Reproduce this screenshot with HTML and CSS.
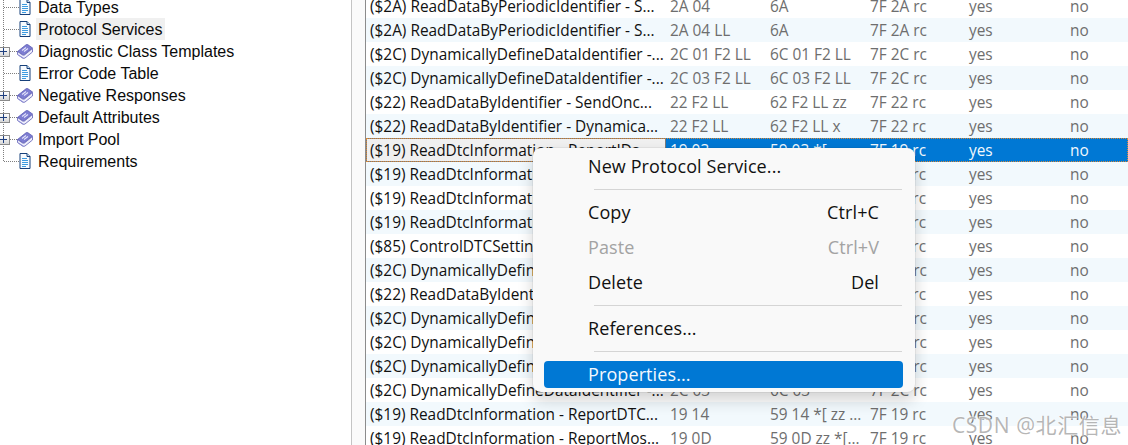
FILE: index.html
```html
<!DOCTYPE html>
<html lang="en">
<head>
<meta charset="utf-8">
<title>Protocol Services</title>
<link rel="stylesheet" href="styles.css">
</head>
<body>
<svg class="defs" width="0" height="0" aria-hidden="true">
  <symbol id="doc" viewBox="0 0 12 16">
    <path d="M1 .5h7l3 3v12h-10z" fill="#f7fbff" stroke="#17407a"/>
    <path d="M8 .5v3h3" fill="#cfe3f5" stroke="#17407a"/>
    <path d="M3 5.500h5M3 7.500h6M3 9.500h6M3 11.500h6M3 13.500h4" stroke="#3d9be0" fill="none"/>
  </symbol>
  <symbol id="book" viewBox="0 0 16 15">
    <path d="M.5 7.500 9 .8q1-.5 2 0l4.500 3.200-8 6.500q-1 .5-2 0z" fill="#7d7dd2" stroke="#5d5db4" stroke-width=".8"/>
    <path d="M.5 7.500v3l5 3.500q1.500 .7 2.500 0l7.500-6v-3.500l-8 6.500q-1 .5-2 0z" fill="#eeeefb" stroke="#6060b6" stroke-width=".8"/>
    <path d="M1.500 11l5 3.300" stroke="#8f8fd8" fill="none"/>
    <path d="M5 6.500l4-3M7 7.500l4-3" stroke="#e3e3fa" fill="none" stroke-width="1.100"/>
  </symbol>
</svg>
<main class="window">
  <nav class="tree">
    <div class="node"><span class="lead"><i class="dash"></i></span><svg class="ico-doc"><use href="#doc"/></svg><span class="label">Data Types</span></div>
    <div class="node"><span class="lead"><i class="dash"></i></span><svg class="ico-doc"><use href="#doc"/></svg><span class="label current">Protocol Services</span></div>
    <div class="node"><span class="lead"><b class="box"></b><i class="dash"></i></span><svg class="ico-book"><use href="#book"/></svg><span class="label">Diagnostic Class Templates</span></div>
    <div class="node"><span class="lead"><i class="dash"></i></span><svg class="ico-doc"><use href="#doc"/></svg><span class="label">Error Code Table</span></div>
    <div class="node"><span class="lead"><b class="box"></b><i class="dash"></i></span><svg class="ico-book"><use href="#book"/></svg><span class="label">Negative Responses</span></div>
    <div class="node"><span class="lead"><b class="box"></b><i class="dash"></i></span><svg class="ico-book"><use href="#book"/></svg><span class="label">Default Attributes</span></div>
    <div class="node"><span class="lead"><b class="box"></b><i class="dash"></i></span><svg class="ico-book"><use href="#book"/></svg><span class="label">Import Pool</span></div>
    <div class="node last"><span class="lead"><i class="dash"></i></span><svg class="ico-doc"><use href="#doc"/></svg><span class="label">Requirements</span></div>
  </nav>
  <section class="list">
    <div class="row"><span>($2A) ReadDataByPeriodicIdentifier - S...</span><span>2A 04</span><span>6A</span><span>7F 2A rc</span><span>yes</span><span>no</span></div>
    <div class="row alt"><span>($2A) ReadDataByPeriodicIdentifier - S...</span><span>2A 04 LL</span><span>6A</span><span>7F 2A rc</span><span>yes</span><span>no</span></div>
    <div class="row"><span>($2C) DynamicallyDefineDataIdentifier -...</span><span>2C 01 F2 LL</span><span>6C 01 F2 LL</span><span>7F 2C rc</span><span>yes</span><span>no</span></div>
    <div class="row alt"><span>($2C) DynamicallyDefineDataIdentifier -...</span><span>2C 03 F2 LL</span><span>6C 03 F2 LL</span><span>7F 2C rc</span><span>yes</span><span>no</span></div>
    <div class="row"><span>($22) ReadDataByIdentifier - SendOnc...</span><span>22 F2 LL</span><span>62 F2 LL zz</span><span>7F 22 rc</span><span>yes</span><span>no</span></div>
    <div class="row alt"><span>($22) ReadDataByIdentifier - Dynamica...</span><span>22 F2 LL</span><span>62 F2 LL x</span><span>7F 22 rc</span><span>yes</span><span>no</span></div>
    <div class="row selected"><span>($19) ReadDtcInformation - ReportIDs...</span><span>19 03</span><span>59 03 *[</span><span>7F 19 rc</span><span>yes</span><span>no</span></div>
    <div class="row alt"><span>($19) ReadDtcInformation - ReportDTC...</span><span>19 02</span><span>59 02</span><span>7F 19 rc</span><span>yes</span><span>no</span></div>
    <div class="row"><span>($19) ReadDtcInformation - ReportDTC...</span><span>19 04</span><span>59 04</span><span>7F 19 rc</span><span>yes</span><span>no</span></div>
    <div class="row alt"><span>($19) ReadDtcInformation - ReportDTC...</span><span>19 06</span><span>59 06</span><span>7F 19 rc</span><span>yes</span><span>no</span></div>
    <div class="row"><span>($85) ControlDTCSetting - Off</span><span>85 02</span><span>C5 02</span><span>7F 85 rc</span><span>yes</span><span>no</span></div>
    <div class="row alt"><span>($2C) DynamicallyDefineDataIdentifier -...</span><span>2C 03</span><span>6C 03</span><span>7F 2C rc</span><span>yes</span><span>no</span></div>
    <div class="row"><span>($22) ReadDataByIdentifier - Dynamica...</span><span>22 F2</span><span>62 F2</span><span>7F 22 rc</span><span>yes</span><span>no</span></div>
    <div class="row alt"><span>($2C) DynamicallyDefineDataIdentifier -...</span><span>2C 01</span><span>6C 01</span><span>7F 2C rc</span><span>yes</span><span>no</span></div>
    <div class="row"><span>($2C) DynamicallyDefineDataIdentifier -...</span><span>2C 02</span><span>6C 02</span><span>7F 2C rc</span><span>yes</span><span>no</span></div>
    <div class="row alt"><span>($2C) DynamicallyDefineDataIdentifier -...</span><span>2C 03</span><span>6C 03</span><span>7F 2C rc</span><span>yes</span><span>no</span></div>
    <div class="row"><span>($2C) DynamicallyDefineDataIdentifier -...</span><span>2C 03</span><span>6C 03</span><span>7F 2C rc</span><span>yes</span><span>no</span></div>
    <div class="row alt"><span>($19) ReadDtcInformation - ReportDTC...</span><span>19 14</span><span>59 14 *[ zz ...</span><span>7F 19 rc</span><span>yes</span><span>no</span></div>
    <div class="row"><span>($19) ReadDtcInformation - ReportMos...</span><span>19 0D</span><span>59 0D zz *[...</span><span>7F 19 rc</span><span>yes</span><span>no</span></div>
  </section>
  <div class="menu" role="menu">
    <div class="item">New Protocol Service...</div>
    <hr class="sep">
    <div class="item"><span>Copy</span><span>Ctrl+C</span></div>
    <div class="item disabled"><span>Paste</span><span>Ctrl+V</span></div>
    <div class="item"><span>Delete</span><span>Del</span></div>
    <hr class="sep">
    <div class="item">References...</div>
    <hr class="sep">
    <div class="item active">Properties...</div>
  </div>
  <div class="watermark">CSDN @北汇信息</div>
</main>
</body>
</html>
```
FILE: styles.css
```css
* { box-sizing: border-box; }
html, body { margin: 0; height: 100%; background: #fff; overflow: hidden; }
.defs { position: absolute; }
.window {
  position: relative;
  display: flex;
  width: 1128px;
  height: 445px;
  overflow: hidden;
  background: #fff;
}

/* Tree */
.tree {
  flex: none;
  width: 351px;
  margin-top: -4px;
  font: 16px/22px "Liberation Sans", Arial, sans-serif;
  color: #0a0a0a;
}
.node {
  display: flex;
  align-items: center;
  height: 22px;
  background: repeating-linear-gradient(#7f7f7f 0 1px, transparent 1px 2px) 3px 0 / 1px 100% no-repeat;
}
.node.last { background-size: 1px 50%; }
.lead { flex: none; display: flex; align-items: center; width: 19px; padding-left: 4px; }
.node:has(.box) .lead { padding-left: 0; }
.dash { flex: 1; height: 1px; background: repeating-linear-gradient(90deg, #7f7f7f 0 1px, transparent 1px 2px); }
.box {
  position: relative;
  flex: none;
  width: 10px;
  height: 10px;
  margin-top: 2px;
  background: linear-gradient(#fff, #d6d6d6);
  border: 1px solid #8a8a8a;
  border-left: 0;
}
.box::before { content: ""; position: absolute; left: 0; top: 3px; width: 7px; height: 1px; background: #1f3f7f; }
.box::after { content: ""; position: absolute; left: 3px; top: 0; width: 1px; height: 7px; background: #1f3f7f; }
.ico-doc { flex: none; width: 12px; height: 16px; margin-right: 5px; }
.ico-book { flex: none; width: 16px; height: 15px; margin-left: -2px; margin-right: 3px; }
.label { flex: none; padding: 1px 2px 0; height: 22px; line-height: 22px; }
.current { background: #f0f0f0; }

/* List */
.list {
  flex: 1;
  margin-top: -6px;
  padding-left: 14px;
  border-left: 1px solid #c4c4c4;
  font: 15.4px/24px "Open Sans", "Noto Sans", sans-serif;
  position: relative;
  background: linear-gradient(#fafafa, #fafafa) 0 0 / 13px 100% no-repeat;
}
.list::before { content: ""; position: absolute; left: 13px; top: 0; bottom: 0; width: 1px; background: #8c8c8c; }
.row {
  display: grid;
  grid-template-columns: 300px 100px 100px 99px 101px 1fr;
  height: 24px;
  color: #6e6e6e;
  white-space: nowrap;
}
.row > span { padding: 1px 0 0 4px; overflow: hidden; }
.row > span:first-child { color: #111; }
.alt { background: #f2f9fd; }
.selected { background: #0078d4; color: #f2f8fd; outline: 1px dotted #d98a3a; outline-offset: -1px; }
.selected > span:first-child { background: #f0f0f0; border: 1px solid #7a7a7a; padding: 0 0 0 3px; }

/* Context menu */
.menu {
  position: absolute;
  left: 533px;
  top: 148px;
  width: 382px;
  height: 244px;
  padding: 3px 12px 0 11px;
  background: #f9f9f9;
  border-radius: 8px;
  box-shadow: 0 0 0 1px rgba(0,0,0,.05), 0 8px 16px rgba(0,0,0,.18);
  font: 18px/30px "Open Sans", "Noto Sans", sans-serif;
  letter-spacing: .1px;
  color: #111;
}
.item {
  display: flex;
  justify-content: space-between;
  height: 30px;
  padding: 0 24px 0 44px;
}
.sep { height: 1px; margin: 8px 1px 7px 50px; border: 0; background: #d5d5d5; }
.item + .item { margin-top: 5px; }
.disabled { color: #a3a3a3; }
.active { height: 27px; margin-top: 9px; line-height: 26px; background: #0078d4; border-radius: 4px; color: #f4f9fe; }

/* Watermark */
.watermark {
  position: absolute;
  right: 6px;
  top: 412px;
  font: 21px/26px "Open Sans", "Noto Sans CJK SC", sans-serif;
  letter-spacing: .6px;
  color: rgba(150,150,150,.7);
  text-shadow: 0 0 2px #fff, 0 0 2px #fff;
}
```
